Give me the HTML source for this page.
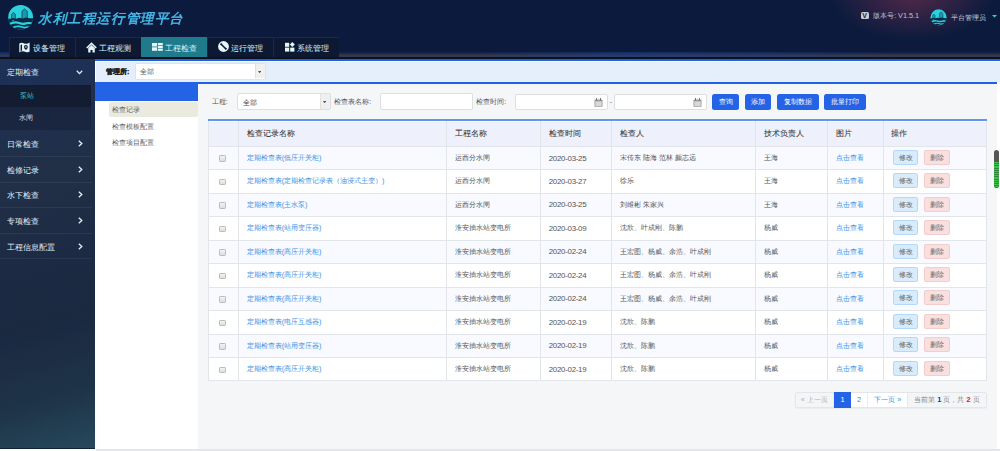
<!DOCTYPE html>
<html><head><meta charset="utf-8">
<style>
*{margin:0;padding:0;box-sizing:border-box}
html,body{width:1000px;height:451px;overflow:hidden;background:#fff;font-family:"Liberation Sans",sans-serif;}
.abs{position:absolute}
#hdr{position:absolute;left:0;top:0;width:1000px;height:58.6px;background:#0c1b3d;overflow:hidden}
#glow{position:absolute;left:830px;top:-50px;width:165px;height:90px;border-radius:50%;background:radial-gradient(ellipse at center,rgba(125,50,80,.6) 0%,rgba(110,45,80,.3) 40%,rgba(110,45,80,0) 70%)}
#band{position:absolute;left:0;top:51.6px;width:1000px;height:5.4px;background:linear-gradient(90deg,rgba(25,60,140,.35) 0,rgba(25,60,140,.3) 20px,rgba(25,60,140,0) 320px,rgba(25,60,140,0) 470px,rgba(25,60,140,.5) 620px,rgba(25,60,140,.35) 760px,rgba(25,60,140,0) 900px),linear-gradient(180deg,#0e1c3c 0%,#252d48 40%,#353b53 75%,#30364a 100%)}
#dline{position:absolute;left:0;top:57px;width:1000px;height:1.6px;background:#0f1219}
.tab{position:absolute;top:37.3px;height:20px;width:66px;background:#0d1833;border-left:1px solid #1b2846;border-top:1px solid #1b2846;color:#dff3f6;font-size:8px;line-height:20px}
.tab.act{background:#1f7a8c;border-left-color:#1f7a8c;border-top-color:#1f7a8c}
.tab span{position:absolute;top:1px}
.tab svg{position:absolute}
#title{position:absolute;left:38px;top:9px;font-size:13.5px;letter-spacing:0.6px;font-style:italic;font-weight:normal;-webkit-text-stroke:0.3px #45c0ea;color:#45c3ea;background:linear-gradient(90deg,#33c8e6,#5ab6f2);-webkit-background-clip:text;background-clip:text;-webkit-text-fill-color:transparent;line-height:20px;white-space:nowrap}
#side{position:absolute;left:0;top:58.6px;width:95.5px;height:390.3px;border-bottom:1px solid #10233a;background:linear-gradient(165deg,#1c3056 0%,#212f47 30%,#1c2a43 52%,#1a2840 66%,#1e3449 86%,#27495b 100%);border-right:1.8px solid #0a1527}
.si{position:absolute;left:0;width:91.5px;height:25.6px;border-bottom:1px solid rgba(255,255,255,.06);color:#e8eef5;font-size:7.5px;line-height:25.6px}
.si span{position:absolute;left:7px;top:0.8px}
.sub{position:absolute;left:0;width:90.5px;height:22.5px;background:#131c31;font-size:7.2px;line-height:22.5px;color:#dde;}
#topblue{position:absolute;left:95px;top:58.9px;width:905px;height:2px;background:#1f5fe8}
#mbar{position:absolute;left:95px;top:60.6px;width:905px;height:21.4px;background:#e5effc;border-top:1.4px solid #fff;border-left:1px solid #fff}
#subnav{position:absolute;left:95px;top:82px;width:103px;height:369px;background:#fff}
#subhead{position:absolute;left:0;top:0;width:103px;height:18.6px;background:#2563e6}
#main{position:absolute;left:198px;top:82px;width:799px;height:367px;background:#f5f6f8;border-top:2px solid #2060e8}
#botline{position:absolute;left:96px;top:448.9px;width:904px;height:2.1px;background:#e4e6e9}
.lbl{position:absolute;font-size:7.2px;color:#555;line-height:10px;white-space:nowrap}
.inp{position:absolute;height:16.6px;background:#fff;border:1px solid #dcdfe4;border-radius:2px}
.btn{position:absolute;top:93.6px;height:16.5px;background:#2563e6;border-radius:2.5px;color:#fff;font-size:7.4px;line-height:16.5px;text-align:center}
table{position:absolute;left:208.2px;top:119.4px;width:778px;border-collapse:collapse;font-size:7.2px;color:#555;table-layout:fixed;border-top:2px solid #5e97f2;background:#fff}
td,th{border:1px solid #e2e5ea;height:23.47px;padding:0 0 0 7.5px;text-align:left;white-space:nowrap;overflow:hidden}
th{height:25.9px;box-shadow:inset 0 1px 0 #fff;background:#eef1fb;font-weight:normal;color:#333;font-size:7.6px;padding-left:7.5px;-webkit-text-stroke:0.05px #333}
tr.o td{background:#f8faff}
.cb{display:inline-block;width:6.5px;height:6.5px;border:1px solid #bbb;border-radius:1.2px;background:linear-gradient(#f4f4f4,#ddd);vertical-align:middle;margin-left:1px}
a{color:#3b94e6;text-decoration:none}
.dt{font-size:7.9px;letter-spacing:-0.28px}
.bm{display:inline-block;width:25.3px;height:15px;line-height:13px;text-align:center;border:1px solid #b4d9f7;background:#d8ecfc;color:#666;border-radius:2px;font-size:7.2px;vertical-align:middle;position:relative;top:-0.9px;margin-left:1.8px}
.bd{display:inline-block;width:25.6px;height:15px;line-height:13px;text-align:center;border:1px solid #f3cccc;background:#f9dfdf;color:#666;border-radius:2px;font-size:7.2px;vertical-align:middle;margin-left:5.8px;position:relative;top:-0.9px}
#pg{position:absolute;left:794.8px;top:392.3px;height:15.5px;width:191.8px;border:1px solid #e3e5e9;border-radius:2px;background:#fff;font-size:7.4px;line-height:13.4px;color:#3a8ee6;box-shadow:0 1px 1px rgba(0,0,0,.04)}
#pg div{position:absolute;top:0;height:13.5px;text-align:center;border-right:1px solid #e8eaee;white-space:nowrap}
</style></head><body>
<div id="hdr">
  <div id="glow"></div>
  <div id="band"></div><div id="dline"></div>
</div>

<div class="tab" style="left:8.5px"><svg style="left:9.5px;top:3.5px" width="11" height="11" viewBox="0 0 11 11"><path d="M0.3 1.6 Q2.6 0.2 5.2 1.4 Q7.8 2.6 10.6 0.6 L10.6 9.4 Q8 11 5.2 9.6 Q2.6 8.4 0.3 10.4 Z" fill="#dff4f6"/><path d="M1.6 3 L3 2.5 L3 8.6 L1.6 9.2 Z" fill="#0d1833"/><circle cx="6.9" cy="5" r="1.9" fill="#0d1833"/><circle cx="6.9" cy="5" r="0.8" fill="#dff4f6"/><path d="M5.5 6.1 L6.9 8.3 L8.3 6.1 Z" fill="#0d1833"/></svg><span style="left:23px">设备管理</span></div>
<div class="tab" style="left:74.5px"><svg style="left:10px;top:3.5px" width="11" height="11" viewBox="0 0 11 11"><path d="M5.5 0.3 L10.8 5.4 L9.6 6.5 L5.5 2.6 L1.4 6.5 L0.2 5.4 Z" fill="#dff4f6"/><path d="M2.2 6 L5.5 3 L8.8 6 L8.8 10.5 L6.5 10.5 L6.5 8 L4.5 8 L4.5 10.5 L2.2 10.5 Z" fill="#dff4f6"/></svg><span style="left:23px">工程观测</span></div>
<div class="tab act" style="left:140.8px"><svg style="left:10.2px;top:4.6px" width="11" height="8" viewBox="0 0 11 8"><rect x="0" y="0" width="5" height="3.5" fill="#e6f7f8"/><rect x="0" y="4.3" width="5" height="3.5" fill="#e6f7f8"/><rect x="5.8" y="0" width="5" height="2.2" fill="#e6f7f8"/><rect x="5.8" y="2.8" width="5" height="2.2" fill="#e6f7f8"/><rect x="5.8" y="5.6" width="5" height="2.2" fill="#e6f7f8"/></svg><span style="left:23px">工程检查</span></div>
<div class="tab" style="left:206.9px"><svg style="left:10.5px;top:3.2px" width="11" height="11" viewBox="0 0 11 11"><circle cx="5.5" cy="5.5" r="5.4" fill="#e6f7f8"/><path d="M3 3 L8 8" stroke="#0d1833" stroke-width="1.5"/><circle cx="3.2" cy="3.2" r="1" fill="#0d1833"/><circle cx="7.8" cy="7.8" r="1" fill="#0d1833"/></svg><span style="left:23px">运行管理</span></div>
<div class="tab" style="left:273px"><svg style="left:10.7px;top:3.8px" width="11" height="10" viewBox="0 0 11 10"><rect x="0" y="0.8" width="4.2" height="4" fill="#e6f7f8"/><rect x="0" y="5.6" width="4.2" height="4" fill="#e6f7f8"/><rect x="5.2" y="5.6" width="4.2" height="4" fill="#e6f7f8"/><path d="M7.3 0 L9.8 2.5 L7.3 5 L4.8 2.5 Z" fill="#e6f7f8"/></svg><span style="left:23px">系统管理</span></div>

<svg class="abs" style="left:6px;top:3px" width="30" height="30" viewBox="0 0 451 451">
<defs><clipPath id="cc"><circle cx="220" cy="215" r="188"/></clipPath></defs>
<circle cx="220" cy="215" r="190" fill="#0b1a36"/>
<circle cx="220" cy="215" r="186" fill="#2ad2dd"/>
<g clip-path="url(#cc)">
<path d="M85 170 L112 140 L140 170 L140 240 L85 240 Z" fill="#1c9eac" stroke="#0e2c47" stroke-width="10"/>
<path d="M240 125 L278 88 L320 125 L320 250 L240 250 Z" fill="#1a9aa9" stroke="#0e2c47" stroke-width="10"/>
<path d="M0 245 L60 235 L100 228 L150 238 L200 222 L250 232 L300 218 L350 228 L451 232 L451 451 L0 451 Z" fill="#0d2a45"/>
<rect x="95" y="258" width="22" height="12" fill="#2ad2dd"/>
<rect x="320" y="285" width="25" height="14" fill="#2ad2dd"/>
<path d="M35 308 Q120 258 200 285 Q255 303 300 290 Q350 276 425 295 L425 325 Q350 306 300 322 Q250 340 200 318 Q120 292 35 345 Z" fill="#2ad2dd"/>
<path d="M75 372 Q140 330 200 338 Q250 348 275 358 Q330 340 405 356 L405 380 Q330 364 275 384 Q235 372 200 364 Q140 354 75 402 Z" fill="#2ad2dd"/>
</g>
</svg>
<div class="abs" style="left:860.8px;top:11.5px;width:8.2px;height:7.3px;background:#c9cbd3;border-radius:1.5px"></div>
<div class="abs" style="left:862.3px;top:11.5px;font-size:7px;line-height:7.6px;font-weight:bold;color:#1a2238">V</div>
<div class="abs" style="left:873px;top:10.8px;font-size:7.3px;line-height:10px;color:#bfc1cd;white-space:nowrap">版本号: V1.5.1</div>
<svg class="abs" style="left:929.2px;top:7.8px" width="19.6" height="19.6" viewBox="0 0 451 451">
<defs><clipPath id="cc2"><circle cx="220" cy="215" r="188"/></clipPath></defs>
<circle cx="220" cy="215" r="190" fill="#0b1a36"/>
<circle cx="220" cy="215" r="186" fill="#2ad2dd"/>
<g clip-path="url(#cc2)">
<path d="M85 170 L112 140 L140 170 L140 240 L85 240 Z" fill="#1c9eac" stroke="#0e2c47" stroke-width="10"/>
<path d="M240 125 L278 88 L320 125 L320 250 L240 250 Z" fill="#1a9aa9" stroke="#0e2c47" stroke-width="10"/>
<path d="M0 245 L60 235 L100 228 L150 238 L200 222 L250 232 L300 218 L350 228 L451 232 L451 451 L0 451 Z" fill="#0d2a45"/>
<rect x="95" y="258" width="22" height="12" fill="#2ad2dd"/>
<rect x="320" y="285" width="25" height="14" fill="#2ad2dd"/>
<path d="M35 308 Q120 258 200 285 Q255 303 300 290 Q350 276 425 295 L425 325 Q350 306 300 322 Q250 340 200 318 Q120 292 35 345 Z" fill="#2ad2dd"/>
<path d="M75 372 Q140 330 200 338 Q250 348 275 358 Q330 340 405 356 L405 380 Q330 364 275 384 Q235 372 200 364 Q140 354 75 402 Z" fill="#2ad2dd"/>
</g>
</svg>
<div class="abs" style="left:951.4px;top:12.5px;font-size:6.9px;line-height:10px;color:#d0d2dc;white-space:nowrap">平台管理员</div>
<svg class="abs" style="left:991.8px;top:14.5px" width="5" height="3" viewBox="0 0 5 3"><path d="M0 0 L5 0 L2.5 2.6 Z" fill="#2ad3df"/></svg>
<div id="title">水利工程运行管理平台</div>

<div id="side">
<div class="si" style="top:0;height:26px;background:rgba(30,52,95,.25);border-bottom:none"><span style="top:1.6px">定期检查</span><svg style="position:absolute;left:76px;top:11.7px" width="7" height="5" viewBox="0 0 7 5"><path d="M0.8 0.8 L3.5 3.6 L6.2 0.8" stroke="#e8eef5" stroke-width="1.3" fill="none"/></svg></div>
<div class="sub" style="top:26.3px;color:#3cc7cc"><span style="position:absolute;left:19.5px">泵站</span></div>
<div class="sub" style="top:48.8px;background:#1a263f"><span style="position:absolute;left:18.6px">水闸</span></div>
<div class="si" style="top:72.8px"><span>日常检查</span><svg style="position:absolute;left:78px;top:8.8px" width="5" height="7" viewBox="0 0 5 7"><path d="M0.8 0.8 L3.8 3.5 L0.8 6.2" stroke="#e8eef5" stroke-width="1.3" fill="none"/></svg></div>
<div class="si" style="top:98.4px"><span>检修记录</span><svg style="position:absolute;left:78px;top:8.8px" width="5" height="7" viewBox="0 0 5 7"><path d="M0.8 0.8 L3.8 3.5 L0.8 6.2" stroke="#e8eef5" stroke-width="1.3" fill="none"/></svg></div>
<div class="si" style="top:124.0px"><span>水下检查</span><svg style="position:absolute;left:78px;top:8.8px" width="5" height="7" viewBox="0 0 5 7"><path d="M0.8 0.8 L3.8 3.5 L0.8 6.2" stroke="#e8eef5" stroke-width="1.3" fill="none"/></svg></div>
<div class="si" style="top:149.6px"><span>专项检查</span><svg style="position:absolute;left:78px;top:8.8px" width="5" height="7" viewBox="0 0 5 7"><path d="M0.8 0.8 L3.8 3.5 L0.8 6.2" stroke="#e8eef5" stroke-width="1.3" fill="none"/></svg></div>
<div class="si" style="top:175.2px"><span>工程信息配置</span><svg style="position:absolute;left:78px;top:8.8px" width="5" height="7" viewBox="0 0 5 7"><path d="M0.8 0.8 L3.8 3.5 L0.8 6.2" stroke="#e8eef5" stroke-width="1.3" fill="none"/></svg></div>
</div>
<div id="topblue"></div>
<div id="mbar"></div>
<div id="subnav"><div id="subhead"></div></div>
<div id="main"></div>

<div class="lbl" style="left:106px;top:66.7px;font-weight:bold;color:#222;font-size:7.2px;-webkit-text-stroke:0.25px #222">管理所:</div>
<div class="inp" style="left:135px;top:63.4px;width:130.6px;height:16.4px;border-color:#e0e3e8;border-radius:1px"><span class="lbl" style="left:3.8px;top:2.6px;color:#555">全部</span><div style="position:absolute;right:0;top:0;width:10px;height:14px;background:#f0f0f0;border-left:1px solid #e0e0e0"></div><svg style="position:absolute;right:3.5px;top:6.2px" width="3.2" height="2.4" viewBox="0 0 4 3"><path d="M0 0 L4 0 L2 3Z" fill="#555"/></svg></div>
<div class="abs" style="left:109px;top:101.6px;width:88.8px;height:15.4px;background:#ebeadf;border-radius:2.5px"></div>
<div class="lbl" style="left:112px;top:104.6px;color:#606060;font-size:6.9px">检查记录</div>
<div class="lbl" style="left:112px;top:121.6px;color:#606060;font-size:6.9px">检查模板配置</div>
<div class="lbl" style="left:112px;top:137.6px;color:#606060;font-size:6.9px">检查项目配置</div>

<div class="lbl" style="left:211.8px;top:96.5px;color:#555">工程:</div>
<div class="inp" style="left:237.4px;top:93.4px;width:93.2px;"><span class="lbl" style="left:4.5px;top:3.2px;color:#444">全部</span><div style="position:absolute;right:0;top:0;width:9.6px;height:14.6px;background:#efefef;border-left:1px solid #e2e2e2"></div><svg style="position:absolute;right:3.3px;top:6.4px" width="3.2" height="2.4" viewBox="0 0 4 3"><path d="M0 0 L4 0 L2 3Z" fill="#555"/></svg></div>
<div class="lbl" style="left:334.2px;top:96.5px;color:#555">检查表名称:</div>
<div class="inp" style="left:380.3px;top:93.4px;width:92.3px;"></div>
<div class="lbl" style="left:476.2px;top:96.5px;color:#555">检查时间:</div>
<div class="inp" style="left:515.3px;top:93.6px;width:92.4px;"><svg style="position:absolute;left:77.5px;top:3.5px" width="9" height="9" viewBox="0 0 9 9"><rect x="0.5" y="1.5" width="8" height="7.3" fill="#999" rx="0.5"/><rect x="1.3" y="3.3" width="6.4" height="4.8" fill="#d8d8d8"/><rect x="2" y="0" width="1" height="2.5" fill="#777"/><rect x="6" y="0" width="1" height="2.5" fill="#777"/></svg></div>
<div class="lbl" style="left:609.8px;top:96.5px;color:#777">-</div>
<div class="inp" style="left:614.4px;top:93.6px;width:92.4px;"><svg style="position:absolute;left:77.5px;top:3.5px" width="9" height="9" viewBox="0 0 9 9"><rect x="0.5" y="1.5" width="8" height="7.3" fill="#999" rx="0.5"/><rect x="1.3" y="3.3" width="6.4" height="4.8" fill="#d8d8d8"/><rect x="2" y="0" width="1" height="2.5" fill="#777"/><rect x="6" y="0" width="1" height="2.5" fill="#777"/></svg></div>
<div class="btn" style="left:712.1px;width:26.9px">查询</div>
<div class="btn" style="left:744.6px;width:26.7px">添加</div>
<div class="btn" style="left:777px;width:41.6px">复制数据</div>
<div class="btn" style="left:824px;width:41.7px">批量打印</div>
<table><colgroup><col style="width:30.0px"><col style="width:207.9px"><col style="width:94.2px"><col style="width:71.0px"><col style="width:144.0px"><col style="width:72.0px"><col style="width:55.4px"><col style="width:103.5px"></colgroup><tr><th></th><th>检查记录名称</th><th>工程名称</th><th>检查时间</th><th>检查人</th><th>技术负责人</th><th>图片</th><th>操作</th></tr><tr class="o"><td style="padding-left:9px"><span class="cb"></span></td><td><a>定期检查表(低压开关柜)</a></td><td>运西分水闸</td><td class="dt">2020-03-25</td><td>宋传东 陆海 范林 颜志远</td><td>王海</td><td><a>点击查看</a></td><td><span class="bm">修改</span><span class="bd">删除</span></td></tr><tr><td style="padding-left:9px"><span class="cb"></span></td><td><a>定期检查表(定期检查记录表（油浸式主变）)</a></td><td>运西分水闸</td><td class="dt">2020-03-27</td><td>徐乐</td><td>王海</td><td><a>点击查看</a></td><td><span class="bm">修改</span><span class="bd">删除</span></td></tr><tr class="o"><td style="padding-left:9px"><span class="cb"></span></td><td><a>定期检查表(主水泵)</a></td><td>运西分水闸</td><td class="dt">2020-03-25</td><td>刘维彬 朱家兴</td><td>王海</td><td><a>点击查看</a></td><td><span class="bm">修改</span><span class="bd">删除</span></td></tr><tr><td style="padding-left:9px"><span class="cb"></span></td><td><a>定期检查表(站用变压器)</a></td><td>淮安抽水站变电所</td><td class="dt">2020-03-09</td><td>沈欣、叶成刚、陈鹏</td><td>杨威</td><td><a>点击查看</a></td><td><span class="bm">修改</span><span class="bd">删除</span></td></tr><tr class="o"><td style="padding-left:9px"><span class="cb"></span></td><td><a>定期检查表(高压开关柜)</a></td><td>淮安抽水站变电所</td><td class="dt">2020-02-24</td><td>王宏图、杨威、余浩、叶成刚</td><td>杨威</td><td><a>点击查看</a></td><td><span class="bm">修改</span><span class="bd">删除</span></td></tr><tr><td style="padding-left:9px"><span class="cb"></span></td><td><a>定期检查表(高压开关柜)</a></td><td>淮安抽水站变电所</td><td class="dt">2020-02-24</td><td>王宏图、杨威、余浩、叶成刚</td><td>杨威</td><td><a>点击查看</a></td><td><span class="bm">修改</span><span class="bd">删除</span></td></tr><tr class="o"><td style="padding-left:9px"><span class="cb"></span></td><td><a>定期检查表(高压开关柜)</a></td><td>淮安抽水站变电所</td><td class="dt">2020-02-24</td><td>王宏图、杨威、余浩、叶成刚</td><td>杨威</td><td><a>点击查看</a></td><td><span class="bm">修改</span><span class="bd">删除</span></td></tr><tr><td style="padding-left:9px"><span class="cb"></span></td><td><a>定期检查表(电压互感器)</a></td><td>淮安抽水站变电所</td><td class="dt">2020-02-19</td><td>沈欣、陈鹏</td><td>杨威</td><td><a>点击查看</a></td><td><span class="bm">修改</span><span class="bd">删除</span></td></tr><tr class="o"><td style="padding-left:9px"><span class="cb"></span></td><td><a>定期检查表(站用变压器)</a></td><td>淮安抽水站变电所</td><td class="dt">2020-02-19</td><td>沈欣、陈鹏</td><td>杨威</td><td><a>点击查看</a></td><td><span class="bm">修改</span><span class="bd">删除</span></td></tr><tr><td style="padding-left:9px"><span class="cb"></span></td><td><a>定期检查表(高压开关柜)</a></td><td>淮安抽水站变电所</td><td class="dt">2020-02-19</td><td>沈欣、陈鹏</td><td>杨威</td><td><a>点击查看</a></td><td><span class="bm">修改</span><span class="bd">删除</span></td></tr></table><div id="pg"><div style="left:0;width:38.3px;background:#f4f5f7;color:#b0b0b0">« 上一页</div><div style="left:38.3px;width:16.9px;background:#2563e6;color:#fff;top:-1px;height:15.5px;line-height:15.5px;border:none">1</div><div style="left:55.2px;width:17.4px">2</div><div style="left:72.6px;width:40px">下一页 »</div><div style="left:112.6px;width:77.2px;background:#f4f5f7;color:#888;border-right:none;border-radius:0 2px 2px 0">当前第 <b style="color:#1a1aee">1</b> 页，共 <b style="color:#ff0a0a">2</b> 页</div></div>
<div class="abs" style="left:994px;top:150.4px;width:5px;height:37.2px;border-radius:2.5px;overflow:hidden;background:#555"><div style="position:absolute;left:0;top:11.8px;width:5px;height:25.4px;border-radius:0 0 2.5px 2.5px;background:repeating-linear-gradient(#3fbf4c 0,#3fbf4c 1.3px,#2a8a36 1.3px,#2a8a36 2.2px)"></div></div>
<div id="botline"></div>
</body></html>
